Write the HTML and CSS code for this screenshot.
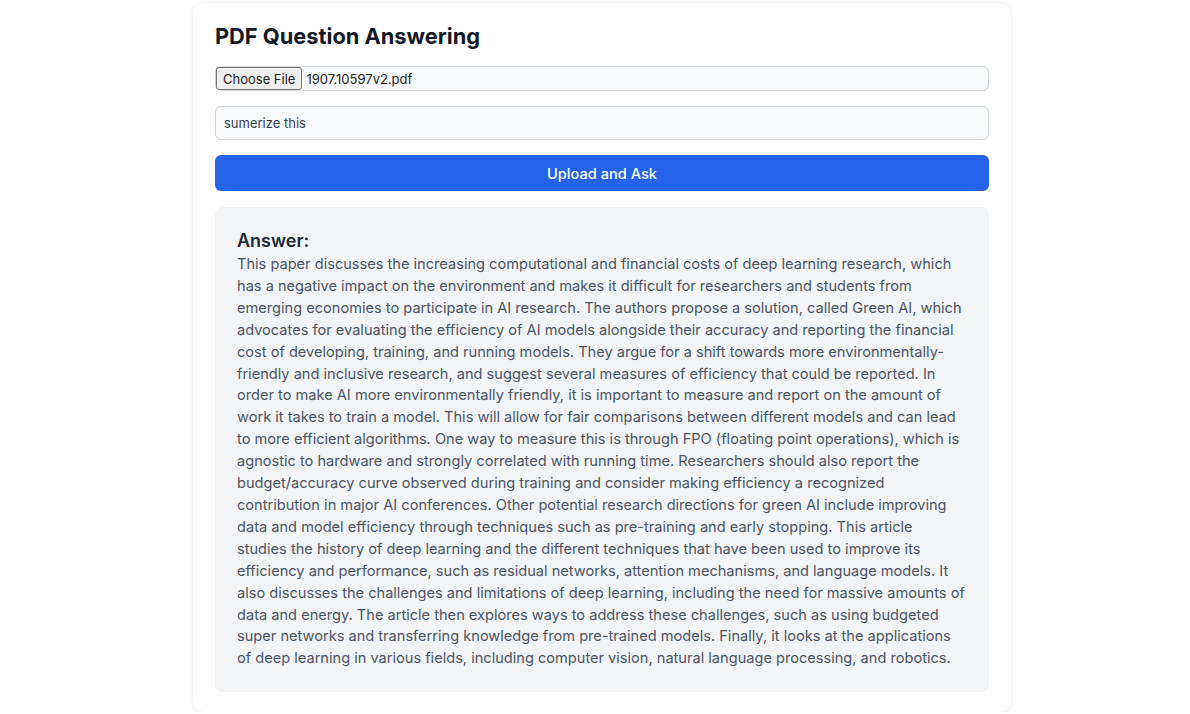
FILE: index.html
```html
<!DOCTYPE html>
<html>
<head>
<meta charset="utf-8">
<link rel="stylesheet" href="styles.css">
</head>
<body>
<main class="card">
  <h1 class="title">PDF Question Answering</h1>
  <div class="file-field">
    <span class="file-btn">Choose File</span>
    <span class="file-name">1907.10597v2.pdf</span>
  </div>
  <div class="text-field">sumerize this</div>
  <button class="submit">Upload and Ask</button>
  <section class="answer">
    <h2 class="answer-title">Answer:</h2>
    <p class="answer-text">This paper discusses the increasing computational and financial costs of deep learning research, which has a negative impact on the environment and makes it difficult for researchers and students from emerging economies to participate in AI research. The authors propose a solution, called Green AI, which advocates for evaluating the efficiency of AI models alongside their accuracy and reporting the financial cost of developing, training, and running models. They argue for a shift towards more environmentally-friendly and inclusive research, and suggest several measures of efficiency that could be reported. In order to make AI more environmentally friendly, it is important to measure and report on the amount of work it takes to train a model. This will allow for fair comparisons between different models and can lead to more efficient algorithms. One way to measure this is through FPO (floating point operations), which is agnostic to hardware and strongly correlated with running time. Researchers should also report the budget/accuracy curve observed during training and consider making efficiency a recognized contribution in major AI conferences. Other potential research directions for green AI include improving data and model efficiency through techniques such as pre-training and early stopping. This article studies the history of deep learning and the different techniques that have been used to improve its efficiency and performance, such as residual networks, attention mechanisms, and language models. It also discusses the challenges and limitations of deep learning, including the need for massive amounts of data and energy. The article then explores ways to address these challenges, such as using budgeted super networks and transferring knowledge from pre-trained models. Finally, it looks at the applications of deep learning in various fields, including computer vision, natural language processing, and robotics.</p>
  </section>
</main>
</body>
</html>
```

FILE: styles.css
```css
html, body {
  margin: 0;
  padding: 0;
  background: #ffffff;
  font-family: Inter, "Liberation Sans", sans-serif;
  color: #1f2937;
}

body {
  padding-top: 3px;
}

.card {
  box-sizing: border-box;
  width: 818px;
  margin: 0 0 0 193px;
  padding: 19px 22px 20px;
  background: #ffffff;
  border-radius: 10px;
  box-shadow: 0 1px 4px rgba(0, 0, 0, 0.08), 0 0 1px rgba(0, 0, 0, 0.06);
  display: flex;
  flex-direction: column;
}

.title {
  margin: 0;
  font-size: 21.8px;
  line-height: 28px;
  font-weight: 700;
  color: #111827;
}

.file-field {
  margin-top: 16px;
  height: 25px;
  box-sizing: border-box;
  border: 1px solid #d1d5db;
  border-radius: 6px;
  background: #f9fafb;
  display: flex;
  align-items: center;
  font-size: 13px;
  color: #374151;
}

.file-btn {
  box-sizing: border-box;
  height: 23px;
  padding: 0 6px;
  display: flex;
  align-items: center;
  background: #efefef;
  border: 1px solid #767676;
  border-radius: 3px;
  color: #222;
  font-size: 13px;
}

.file-name {
  margin-left: 4px;
  color: #222;
}

.text-field {
  margin-top: 15px;
  height: 34px;
  box-sizing: border-box;
  border: 1px solid #d1d5db;
  border-radius: 6px;
  background: #f9fafb;
  padding: 0 8px;
  display: flex;
  align-items: center;
  font-size: 13px;
  color: #374151;
}

.submit {
  margin-top: 15px;
  height: 36px;
  border: none;
  border-radius: 6px;
  background: #2563eb;
  color: #ffffff;
  font-family: inherit;
  font-size: 14.6px;
  font-weight: 500;
  padding: 1px 0 0;
}

.answer {
  margin-top: 16px;
  background: #f3f4f6;
  border-radius: 7px;
  padding: 21px 23.7px 22px 22px;
}

.answer-title {
  margin: 0;
  font-size: 18px;
  line-height: 26px;
  font-weight: 600;
  color: #1f2937;
}

.answer-text {
  margin: 0;
  font-size: 14.6px;
  line-height: 21.9px;
  color: #4b5563;
}
```
